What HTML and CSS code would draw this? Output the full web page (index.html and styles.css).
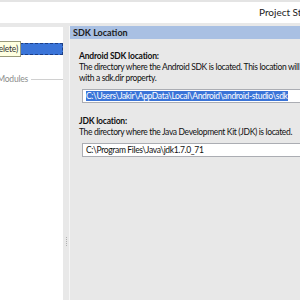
FILE: index.html
```html
<!DOCTYPE html>
<html lang="en">
<head>
  <meta charset="UTF-8" />
  <title>Project Structure</title>
  <link rel="stylesheet" href="styles.css">
</head>
<body>
  <header class="titlebar">Project Structure</header>
  <div class="window">
    <aside class="sidebar">
      <div class="row selected">
        <span class="tip"><span>(Delete)</span></span>
      </div>
      <div class="group"><span>Modules</span><span class="rule"></span></div>
    </aside>
    <div class="splitter"><span class="grip"></span></div>
    <section class="panel">
      <div class="panel-head">SDK Location</div>
      <div class="panel-body">
        <div class="field">
          <h3>Android SDK location:</h3>
          <p>The directory where the Android SDK is located. This location will be written to local.properties</p>
          <p>with a sdk.dir property.</p>
          <div class="input"><span class="sel">C:\Users\Jakir\AppData\Local\Android\android-studio\sdk</span></div>
        </div>
        <div class="field">
          <h3>JDK location:</h3>
          <p>The directory where the Java Development Kit (JDK) is located.</p>
          <div class="input">C:\Program Files\Java\jdk1.7.0_71</div>
        </div>
      </div>
    </section>
  </div>
</body>
</html>
```

FILE: styles.css
```css
* { box-sizing: border-box; margin: 0; padding: 0; }
body {
  width: 300px;
  height: 300px;
  overflow: hidden;
  font-family: Lato, "Open Sans", sans-serif;
  font-size: 8.5px;
  letter-spacing: -0.2px;
  color: #111;
  background: #e8e8e8;
}
.titlebar {
  height: 23px;
  border-top: 2px solid #e4e4e4;
  background: #fff;
  padding-left: 259px;
  white-space: nowrap;
  overflow: hidden;
  font-size: 10px;
  letter-spacing: 0;
  line-height: 21px;
  color: #222;
}
.window {
  display: flex;
  height: 277px;
  padding-top: 2px;
}
.sidebar {
  width: 63px;
  flex: none;
  background: #fff;
  margin-top: 2px;
  padding-top: 16px;
}
.row {
  height: 12px;
  position: relative;
}
.row.selected {
  background: #3a74d8;
  border: 1px dashed #1c3f86;
  border-left: none;
}
.tip {
  position: absolute;
  left: 0;
  top: -3px;
  height: 16px;
  width: 21px;
  background: #ffffe1;
  border: 1px solid #9a9a7a;
  border-left: none;
  line-height: 14px;
  color: #333;
  overflow: hidden;
  white-space: nowrap;
  display: flex;
  justify-content: flex-end;
  padding-right: 2px;
}
.tip span { flex: none; }
.group {
  display: flex;
  align-items: center;
  margin-top: 19px;
  color: #8c8c8c;
  white-space: nowrap;
  overflow: hidden;
  justify-content: flex-end;
}
.group span { flex: none; }
.group .rule {
  width: 32px;
  height: 1px;
  background: #d0d0d0;
  margin-left: 3px;
}
.splitter {
  width: 6px;
  flex: none;
  display: flex;
  align-items: flex-end;
  justify-content: center;
  padding-bottom: 54px;
}
.grip {
  width: 1px;
  height: 9px;
  border-left: 1px dotted #b0b0b0;
}
.panel {
  flex: 1;
  background: #e8e8e8;
  border-left: 1px solid #f6f6f6;
  margin-top: 1px;
  overflow: hidden;
}
.panel-head {
  height: 13px;
  background: #a9c0e3;
  padding-left: 3px;
  font-weight: bold;
  font-size: 9px;
  letter-spacing: 0;
  line-height: 13px;
  color: #1d1d1d;
  white-space: nowrap;
}
.panel-body {
  padding: 12px 0 0 9px;
  display: flex;
  flex-direction: column;
  gap: 13px;
}
.field h3 {
  font-size: 8.5px;
  font-weight: bold;
  line-height: 11px;
}
.field p {
  line-height: 11px;
  white-space: nowrap;
  letter-spacing: -0.35px;
}
.input {
  margin: 5px 0 0 3px;
  height: 14px;
  background: #fff;
  border: 1px solid #abadb3;
  border-right: none;
  padding-left: 3px;
  line-height: 12px;
  white-space: nowrap;
  letter-spacing: -0.35px;
}
.sel {
  background: #3a74d8;
  color: #fff;
}
```
